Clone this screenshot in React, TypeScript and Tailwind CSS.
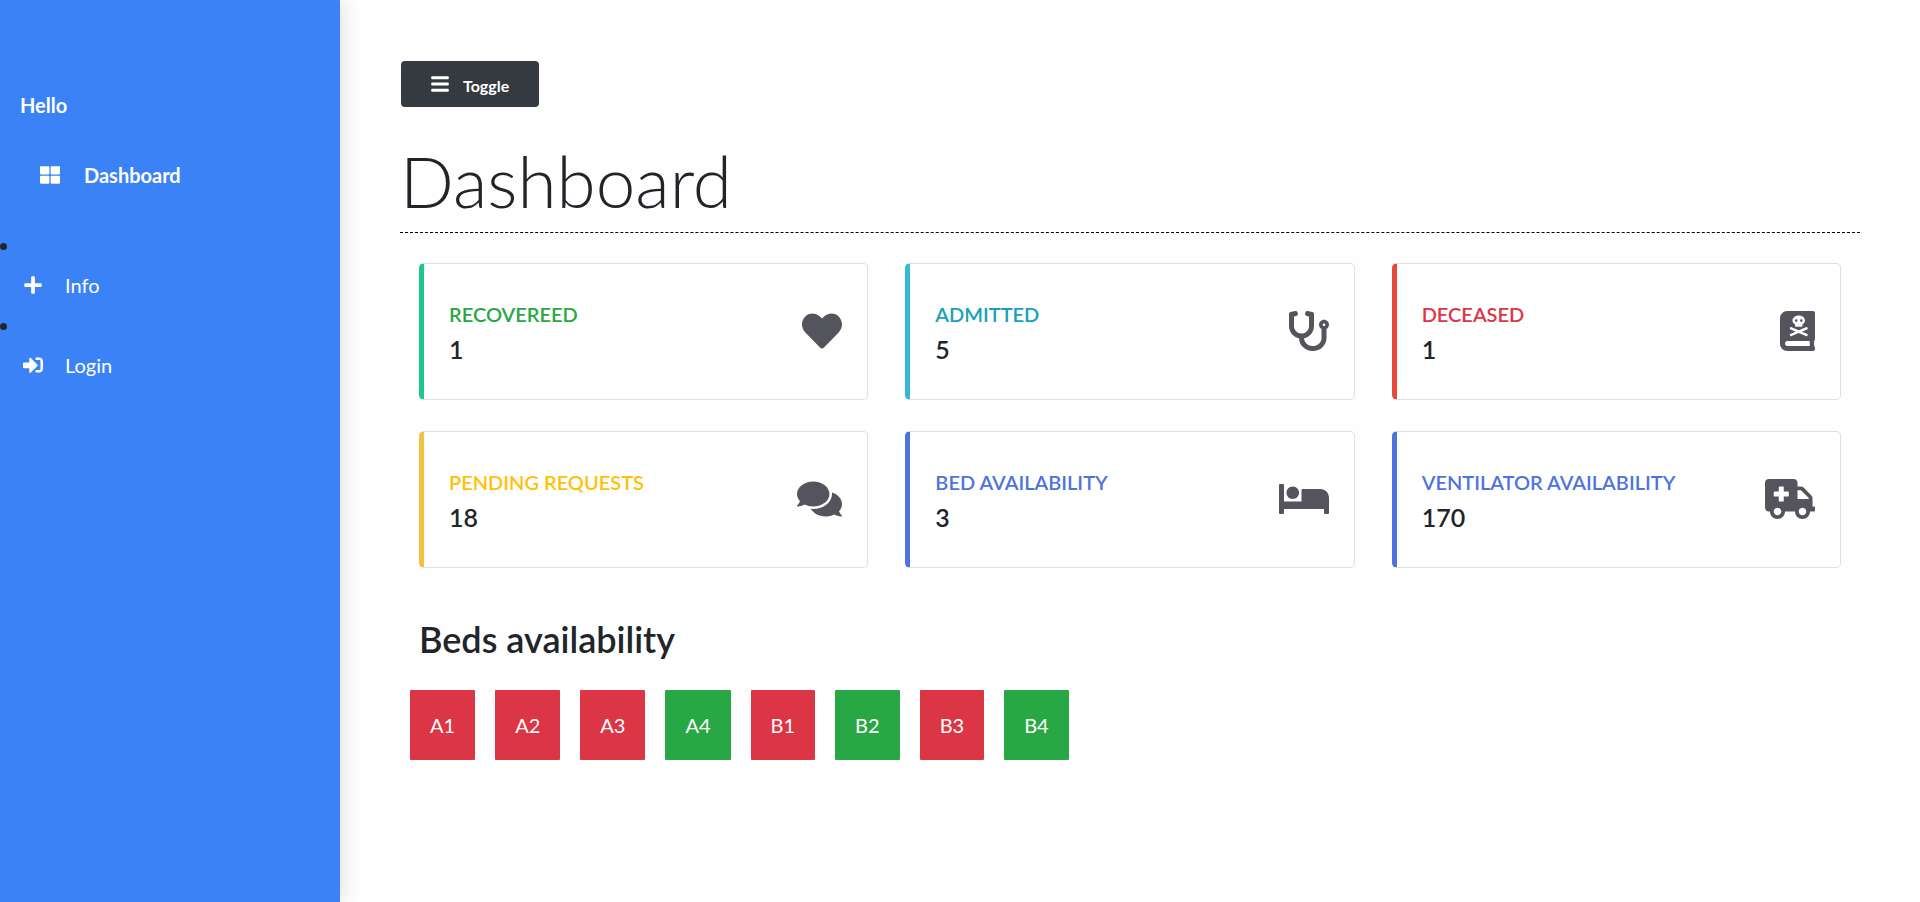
import { useState } from "react";
import type { IconType } from "react-icons";
import {
  FaAmbulance,
  FaBars,
  FaBed,
  FaBookDead,
  FaComments,
  FaHeart,
  FaPlus,
  FaSignInAlt,
  FaStethoscope,
  FaThLarge,
} from "react-icons/fa";

type Stat = { label: string; value: number; border: string; text: string; Icon: IconType; width: string };

const stats: Stat[] = [
  { label: "RECOVEREED", value: 1, border: "border-l-[#1cc88a]", text: "text-[#28a745]", Icon: FaHeart, width: "w-10" },
  { label: "ADMITTED", value: 5, border: "border-l-[#36b9cc]", text: "text-[#17a2b8]", Icon: FaStethoscope, width: "w-10" },
  { label: "DECEASED", value: 1, border: "border-l-[#e74a3b]", text: "text-[#dc3545]", Icon: FaBookDead, width: "w-[35px]" },
  { label: "PENDING REQUESTS", value: 18, border: "border-l-[#f6c23e]", text: "text-[#ffc107]", Icon: FaComments, width: "w-[45px]" },
  { label: "BED AVAILABILITY", value: 3, border: "border-l-[#4e73df]", text: "text-[#4e73df]", Icon: FaBed, width: "w-[50px]" },
  { label: "VENTILATOR AVAILABILITY", value: 170, border: "border-l-[#4e73df]", text: "text-[#4e73df]", Icon: FaAmbulance, width: "w-[50px]" },
];

const beds = [
  { name: "A1", free: false },
  { name: "A2", free: false },
  { name: "A3", free: false },
  { name: "A4", free: true },
  { name: "B1", free: false },
  { name: "B2", free: true },
  { name: "B3", free: false },
  { name: "B4", free: true },
];

function StatCard({ label, value, border, text, Icon, width }: Stat) {
  return (
    <div className={`flex items-start justify-between rounded-[5px] border border-l-[5px] border-[#dfdfdf] bg-white py-[35px] pr-[25px] pl-[25px] ${border}`}>
      <div>
        <div className={`text-xl leading-[30px] font-semibold ${text}`}>{label}</div>
        <div className="pt-[5px] text-[25px] leading-[30px] font-semibold">{value}</div>
      </div>
      <Icon className={`mt-3 h-10 text-[#54545c] ${width}`} />
    </div>
  );
}

export default function App() {
  const [open, setOpen] = useState(true);
  return (
    <div className="flex min-h-screen bg-[#fefefe] font-[Lato,sans-serif] text-xl text-[#212529]">
      {open && (
        <nav className="w-[340px] shrink-0 bg-[#3b82f6] pt-[90px] text-white shadow-[0_0_20px_rgba(0,0,0,0.15)]">
          <div className="pl-5 leading-[30px] font-bold">Hello</div>
          <a href="#dashboard" className="mt-10 flex items-center gap-6 pl-10 leading-[30px] font-bold">
            <FaThLarge className="size-5" />
            Dashboard
          </a>
          <ul className="mt-10 list-inside list-disc">
            <li className="leading-[30px] marker:text-[#212529]">
              <a href="#info" className="flex items-center gap-[22px] py-[10px] pl-[23px] leading-[30px]">
                <FaPlus className="size-5" />
                Info
              </a>
            </li>
            <li className="leading-[30px] marker:text-[#212529]">
              <a href="#login" className="flex items-center gap-[22px] py-[10px] pl-[23px] leading-[30px]">
                <FaSignInAlt className="size-5" />
                Login
              </a>
            </li>
          </ul>
        </nav>
      )}
      <main className="min-w-0 flex-1 px-[60px] pt-[61px]">
        <button
          type="button"
          onClick={() => setOpen(!open)}
          className="ml-px flex h-[46px] items-center gap-[14px] rounded bg-[#343a40] px-[30px] text-base font-bold text-white"
        >
          <FaBars className="h-5 w-[18px]" />
          <span className="pt-1">Toggle</span>
        </button>
        <h1 className="mt-8 text-[71px] leading-[84px] font-light">Dashboard</h1>
        <hr className="mt-[9px] border-t border-dashed border-black" />
        <section className="mx-[19px] mt-[30px] grid grid-cols-3 gap-x-[37px] gap-y-[31px]">
          {stats.map((s) => (
            <StatCard key={s.label} {...s} />
          ))}
        </section>
        <h2 className="mt-[50px] ml-[19px] text-4xl leading-[42px] font-semibold">Beds availability</h2>
        <ul className="mt-[30px] ml-[10px] flex flex-wrap gap-5">
          {beds.map((b) => (
            <li
              key={b.name}
              className={`rounded-[1px] p-5 leading-[30px] text-white ${b.free ? "bg-[#28a745]" : "bg-[#dc3545]"}`}
            >
              {b.name}
            </li>
          ))}
        </ul>
      </main>
    </div>
  );
}
